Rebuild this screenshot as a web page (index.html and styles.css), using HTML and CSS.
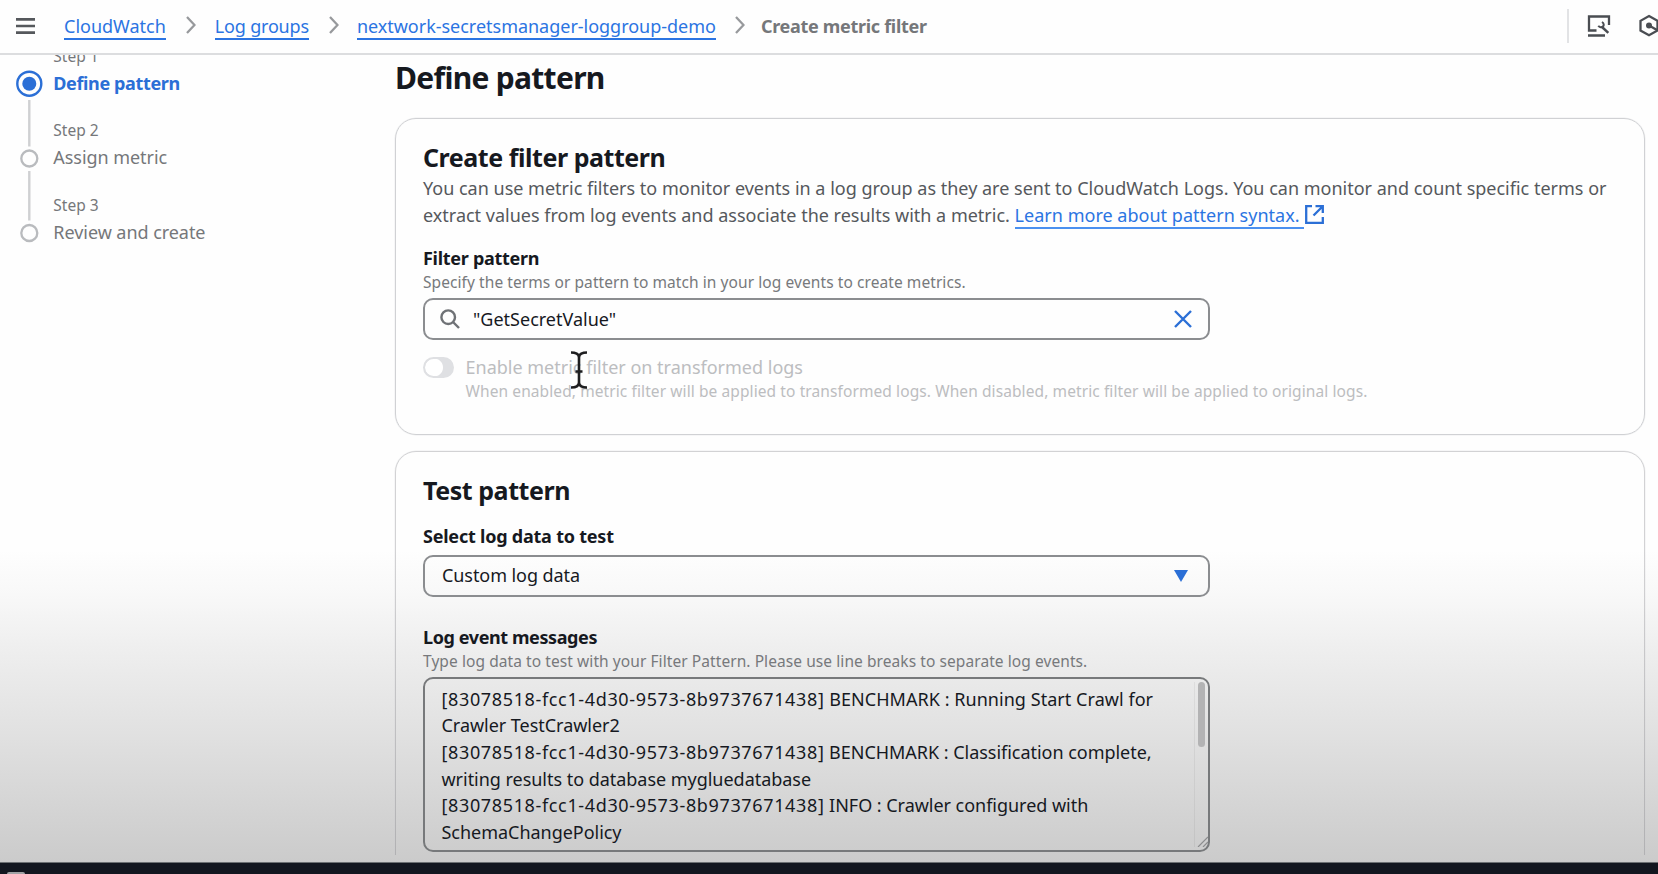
FILE: index.html
```html
<!DOCTYPE html>
<html lang="en">
<head>
<meta charset="utf-8">
<title>Create metric filter</title>
<link rel="stylesheet" href="styles.css">
</head>
<body>
<header class="topbar">
  <svg class="menu" width="19" height="16" viewBox="0 0 19 16"><path d="M0 1.4h19M0 8h19M0 14.6h19" stroke="#55585c" stroke-width="2.6"/></svg>
  <nav class="crumbs">
    <a class="crumb-cw">CloudWatch</a>
    <svg class="chev" width="10" height="18" viewBox="0 0 10 18"><path d="M1 1l7.500 8L1 17"/></svg>
    <a class="crumb-lg">Log groups</a>
    <svg class="chev" width="10" height="18" viewBox="0 0 10 18"><path d="M1 1l7.500 8L1 17"/></svg>
    <a class="crumb-name">nextwork-secretsmanager-loggroup-demo</a>
    <svg class="chev" width="10" height="18" viewBox="0 0 10 18"><path d="M1 1l7.500 8L1 17"/></svg>
    <b>Create metric filter</b>
  </nav>
  <div class="tools">
    <svg width="24" height="24" viewBox="0 0 24 24" fill="none" stroke="#4a4d52" stroke-width="2.300"><path d="M9.500 16.500H2V2.500h20v8.500M1 21.500h17"/><path d="M14.500 12.500l6.800 6.300" stroke-width="2.500"/><path d="M15 8c2 1.200 2.200 3.500 1 4.500s-3.500 1-4.700-.8" stroke-width="2"/></svg>
    <svg width="24" height="24" viewBox="0 0 24 24" fill="none" stroke="#4a4d52" stroke-width="2.300"><path d="M11 2l8.500 4.800v9.700L11 21.300l-8.500-4.800V6.800z"/><circle cx="11" cy="11.500" r="3" fill="#4a4d52" stroke="none"/><path d="M11 11.500l8 4.500"/></svg>
  </div>
</header>
<main class="main">
  <aside class="steps">
    <svg class="rail" width="54" height="200" viewBox="0 0 54 200" fill="none">
      <path d="M29.300 45v46.500M29.300 116v49.500" stroke="#cfd0d2" stroke-width="2.400"/>
      <circle cx="29.300" cy="28.700" r="12" stroke="#2b6fd6" stroke-width="2.400"/>
      <circle cx="29.300" cy="28.700" r="7" fill="#2b6fd6"/>
      <circle cx="29.300" cy="103.500" r="8" stroke="#b9bbbe" stroke-width="2.300"/>
      <circle cx="29.300" cy="178" r="8" stroke="#b9bbbe" stroke-width="2.300"/>
    </svg>
    <ol>
      <li><small>Step 1</small><b>Define pattern</b></li>
      <li><small>Step 2</small><span>Assign metric</span></li>
      <li><small>Step 3</small><span>Review and create</span></li>
    </ol>
  </aside>
  <section class="content">
    <h1>Define pattern</h1>
    <div class="card filter">
      <h2>Create filter pattern</h2>
      <p class="desc">You can use metric filters to monitor events in a log group as they are sent to CloudWatch Logs. You can monitor and count specific terms or<br>extract values from log events and associate the results with a metric. <a>Learn more about pattern syntax. </a><svg class="ext" width="19" height="19" viewBox="0 0 19 19" fill="none" stroke="#2b6fd6" stroke-width="2.300"><path d="M7 1.200H1.200v16.600h16.600V12M10.500 1.200h7.300V8M17.500 1.500L8.500 10.500"/></svg></p>
      <label>Filter pattern</label>
      <p class="hint">Specify the terms or pattern to match in your log events to create metrics.</p>
      <div class="box search">
        <svg width="20" height="20" viewBox="0 0 20 20" fill="none" stroke="#6f7276" stroke-width="2.400"><circle cx="8.200" cy="8.200" r="6.800"/><path d="M13 13l6 6"/></svg>
        <span class="value">"GetSecretValue"</span>
        <svg width="18" height="18" viewBox="0 0 18 18" stroke="#2b6fd6" stroke-width="2.400"><path d="M1 1l16 16M17 1L1 17"/></svg>
      </div>
      <div class="toggle-row">
        <i class="toggle"></i>
        <div><span class="toggle-label">Enable metric filter on transformed logs</span><p class="hint">When enabled, metric filter will be applied to transformed logs. When disabled, metric filter will be applied to original logs.</p></div>
        <svg class="cursor" width="18" height="38" viewBox="0 0 18 38" fill="none" stroke="#1e1e20" stroke-width="2.600"><path d="M1 1.500c4.500 0 8 1.500 8 5v25c0 3.500-3.500 5-8 5M17 1.500c-4.500 0-8 1.500-8 5M17 36.500c-4.500 0-8-1.500-8-5M5.500 20.500h7"/></svg>
      </div>
    </div>
    <div class="card test">
      <h2>Test pattern</h2>
      <label>Select log data to test</label>
      <div class="box select"><span class="value">Custom log data</span><svg width="14" height="12" viewBox="0 0 14 12"><path d="M0 0h14L7 12z" fill="#2b6fd6"/></svg></div>
      <label class="msg-label">Log event messages</label>
      <p class="hint">Type log data to test with your Filter Pattern. Please use line breaks to separate log events.</p>
      <div class="box log">
        <div class="lines">
          <div><span class="id">[83078518-fcc1-4d30-9573-8b9737671438]</span> BENCHMARK : Running Start Crawl for</div>
          <div>Crawler TestCrawler2</div>
          <div><span class="id">[83078518-fcc1-4d30-9573-8b9737671438]</span> BENCHMARK : Classification complete,</div>
          <div>writing results to database mygluedatabase</div>
          <div><span class="id">[83078518-fcc1-4d30-9573-8b9737671438]</span> INFO : Crawler configured with</div>
          <div>SchemaChangePolicy</div>
        </div>
        <div class="track"><i class="thumb"></i><svg width="11" height="11" viewBox="0 0 11 11" stroke="#8b8c8e" stroke-width="1.200"><path d="M1 11L11 1M6 11l5-5"/></svg></div>
      </div>
    </div>
  </section>
</main>
<footer class="bottombar"><i></i></footer>
</body>
</html>
```
FILE: styles.css
```css
* { box-sizing: border-box; margin: 0; padding: 0; }
body {
  width: 1658px;
  height: 874px;
  overflow: hidden;
  display: flex;
  flex-direction: column;
  font: 18px/26.7px "Noto Sans", sans-serif;
  color: #16191f;
  white-space: nowrap;
  background: linear-gradient(#fefefe 0, #fefefe 550px, #f8f8f8 595px, #efefef 645px, #dfdfdf 745px, #cbcbcb 862px);
}
svg { display: block; flex: none; }
a { color: #2b74e2; }

.topbar {
  flex: none;
  height: 54.500px;
  border-bottom: 2px solid #dcdddf;
  display: flex;
  align-items: center;
  padding-left: 16px;
}
.crumbs { display: flex; align-items: center; margin-left: 29px; flex: 1; }
.crumbs a { border-bottom: 2px solid #2b74e2; line-height: 24px; margin-top: 2px; }
.crumbs b { color: #75777a; letter-spacing: -.3px; }
.crumb-lg { letter-spacing: -.19px; }
.crumb-name { letter-spacing: -.02px; }
.chev { fill: none; stroke: #97999c; stroke-width: 2.300; margin: -3px 19px 0 20px; }
.crumb-lg + .chev { margin-right: 18px; }
.crumb-name + .chev { margin: -3px 16px 0 19px; }
.tools {
  display: flex;
  align-items: center;
  gap: 27px;
  width: 91px;
  height: 34px;
  border-left: 2px solid #e2e3e5;
  padding-left: 18px;
  overflow: hidden;
}

.main { flex: none; height: 800.500px; display: flex; overflow: hidden; }
.steps { width: 395px; display: flex; }
.steps ol { list-style: none; margin: -9px 0 0 -.7px; }
.steps li { display: flex; flex-direction: column; gap: 3px; height: 74.900px; color: #75777a; }
.steps li > * { line-height: 26px; }
.steps li small { font-size: 15.500px; line-height: 21px; }
.steps b { color: #2b6fd6; letter-spacing: -.37px; }
.steps span { letter-spacing: -.05px; }

.content { width: 1250px; }
h1 { font-size: 30px; line-height: 36px; letter-spacing: -.7px; margin: 5.500px 0 21.500px; }
h2 { font-size: 25px; line-height: 32px; letter-spacing: -.45px; }
.card { border: 1.500px solid #d0d1d4; box-shadow: 0 0 0 .5px rgba(200, 201, 205, .3); border-radius: 21px; padding: 22px 27px 0; }
.filter { height: 317px; margin-bottom: 16.500px; }
.test { height: 440px; border-color: rgba(120, 122, 128, .33); }
.desc { margin-top: 2.500px; color: #55585c; }
.desc a { display: inline-block; line-height: 23px; border-bottom: 2px solid #4a90f0; white-space: pre; letter-spacing: .02px; }
.ext { display: inline-block; margin-left: 1px; vertical-align: -2.500px; }
label { display: block; line-height: 24px; font-weight: 700; letter-spacing: -.28px; margin-top: 17px; }
.hint { font-size: 15.500px; line-height: 20px; letter-spacing: .075px; color: #77797c; margin-top: 2px; }
.box { width: 787px; height: 42px; border: 2px solid #8b8d90; border-radius: 10px; display: flex; align-items: center; margin-top: 6.500px; }
.search { padding: 0 16px 0 14.500px; }
.value { flex: 1; }
.search .value { margin-left: 13.500px; }
.toggle-row { position: relative; display: flex; margin-top: 15px; color: #bcbdc0; }
.toggle-row .hint { color: #bcbdc0; letter-spacing: .094px; }
.toggle-label { display: block; line-height: 24px; }
.toggle { width: 31px; height: 21px; margin: 2px 11.500px 0 0; border-radius: 11px; border: 2px solid #dfe0e3; background: radial-gradient(circle at 9px 50%, #fff 8.500px, #dfe0e3 9.500px); flex: none; }
.cursor { position: absolute; left: 147px; top: -4px; }
.test label { margin-top: 17.500px; letter-spacing: -.22px; }
.select { padding: 0 20px 0 17px; margin-top: 7px; }
.select .value { letter-spacing: -.07px; }
.test .msg-label { margin-top: 28.500px; letter-spacing: -.4px; }
.log { height: 175px; padding: 6.500px 0 0 16.500px; align-items: flex-start; justify-content: space-between; border-color: #77797b; margin-top: 6px; }
.lines { letter-spacing: -.03px; }
.lines > div:first-child { letter-spacing: .05px; }
.id { letter-spacing: .64px; }
.track { height: 165px; margin-top: -4px; width: 14px; border-left: 1px solid rgba(0, 0, 0, .05); display: flex; flex-direction: column; align-items: center; justify-content: space-between; }
.track svg { align-self: flex-end; }
.thumb { width: 7px; height: 65px; border-radius: 4px; background: #b3b3b4; margin-right: 1px; }

.bottombar { flex: none; margin-top: 7px; height: 12px; background: #12161f; border-top: 1px solid #6c7073; display: flex; align-items: flex-end; padding-left: 7px; }
.bottombar i { width: 18px; height: 2px; border-radius: 2px 2px 0 0; background: #a0a2a5; }
```
